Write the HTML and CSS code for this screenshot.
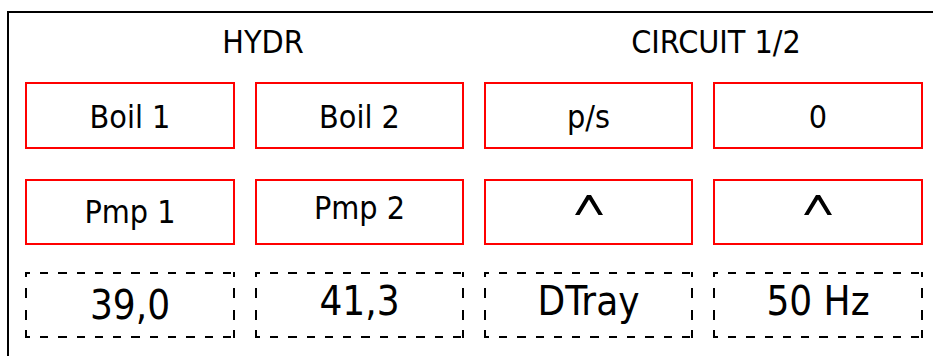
FILE: index.html
```html
<!DOCTYPE html>
<html lang="en">
<head>
  <meta charset="UTF-8">
  <meta name="viewport" content="width=device-width, initial-scale=1.0">
  <title>Hydraulic circuit</title>
  <link rel="stylesheet" href="styles.css">
</head>
<body>

  <div class="frame">
    <div class="grid heads">
      <div class="head head-left">HYDR</div>
      <div class="head head-right">CIRCUIT 1/2</div>
    </div>

    <div class="grid row row-1">
      <div class="btn">Boil 1</div>
      <div class="btn">Boil 2</div>
      <div class="btn">p/s</div>
      <div class="btn">0</div>
    </div>

    <div class="grid row row-2">
      <div class="btn">Pmp 1</div>
      <div class="btn up">Pmp 2</div>
      <div class="btn">
        <svg class="caret" width="28" height="20" viewBox="0 0 28 20"><polygon points="0,20 12,0 16,0 28,20 23.5,20 14,4.5 4.5,20"/></svg>
      </div>
      <div class="btn">
        <svg class="caret" width="28" height="20" viewBox="0 0 28 20"><polygon points="0,20 12,0 16,0 28,20 23.5,20 14,4.5 4.5,20"/></svg>
      </div>
    </div>

    <div class="grid row row-3">
      <div class="value">39,0</div>
      <div class="value up">41,3</div>
      <div class="value up">DTray</div>
      <div class="value up">50 Hz</div>
    </div>
  </div>

</body>
</html>
```

FILE: styles.css
```css
body {
  margin: 0;
  overflow: hidden;
  background: #fff;
  color: #000;
  font-family: "DejaVu Sans Condensed", "DejaVu Sans", sans-serif;
  font-stretch: condensed;
}

.frame {
  margin: 11px 0 0 7px;
  width: 926px;
  height: 345px;
  border-top: 2px solid #000;
  border-left: 2px solid #000;
  padding: 9px 0 0 16px;
  box-sizing: border-box;
}

.grid {
  display: grid;
  grid-template-columns: 210px 209px 209px 210px;
  column-gap: 20px;
}

/* header labels */
.head {
  grid-column: span 2;
  font-size: 32px;
  line-height: 40px;
  text-align: center;
}

.head-left {
  padding-left: 37px;
}

.head-right {
  padding-left: 25px;
}

.row-1 {
  margin-top: 20px;
  grid-template-rows: 67px;
}

.row-2 {
  margin-top: 30px;
  grid-template-rows: 66px;
}

.row-3 {
  margin-top: 27px;
  grid-template-rows: 66px;
}

.btn,
.value {
  display: flex;
  justify-content: center;
  align-items: center;
  box-sizing: border-box;
  white-space: nowrap;
}

.btn {
  border: 2px solid #f00;
  font-size: 32px;
}

.row-1 .btn {
  padding-top: 3px;
}

.btn.up,
.value.up {
  padding-bottom: 8px;
}

.caret {
  display: block;
  margin-bottom: 14px;
  fill: #000;
}

/* dashed box drawn with gradients so dash length matches */
.value {
  font-size: 40px;
  background:
    repeating-linear-gradient(90deg, #000 0 5px, transparent 5px 15px, #000 15px 18.3px) top left / 100% 2px no-repeat,
    repeating-linear-gradient(90deg, #000 0 5px, transparent 5px 15px, #000 15px 18.3px) bottom left / 100% 2px no-repeat,
    linear-gradient(180deg, #000 0 5px, transparent 5px 16px, #000 16px 26px, transparent 26px 38px, #000 38px 48px, transparent 48px 58px, #000 58px 66px) top left / 2px 100% no-repeat,
    linear-gradient(180deg, #000 0 5px, transparent 5px 16px, #000 16px 26px, transparent 26px 38px, #000 38px 48px, transparent 48px 58px, #000 58px 66px) top right / 2px 100% no-repeat;
}
```
